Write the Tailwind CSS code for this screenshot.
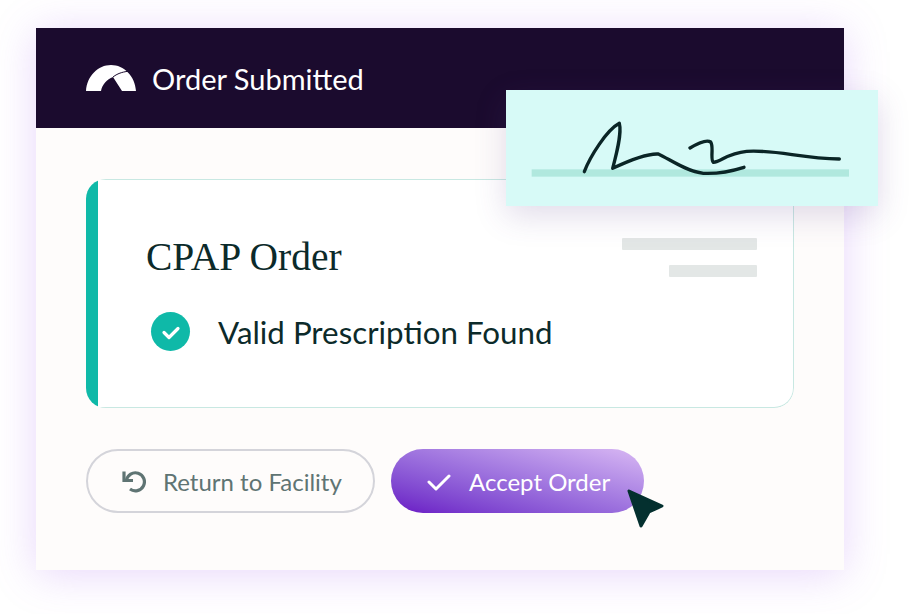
<!DOCTYPE html>
<html lang="en">
<head>
  <meta charset="UTF-8" />
  <title>Order Submitted</title>
  <script src="https://cdn.jsdelivr.net/npm/@tailwindcss/browser@4"></script>
</head>
<body class="bg-white font-['Lato',sans-serif] overflow-hidden">
  <div class="relative w-[915px] h-[614px] pl-[36px] pt-[28px]">

    <!-- Main panel -->
    <div class="w-[808px] h-[542px] bg-[#fefcfb] shadow-[0_4px_40px_rgba(165,95,240,0.26)]">
      <div class="h-[100px] bg-[#1b0b2e] flex items-center pl-[50px] gap-[16px]">
        <svg class="w-[50px] h-[26px]" viewBox="0 0 50 26">
          <path fill="#fff" d="M0 26C1 11 12 0 25 0S49 11 50 26H36L27 12C21 14 16 20 15 26Z" />
          <path fill="none" stroke="#1b0b2e" stroke-width="1" d="M27 12C32 8 38 6.500 45 6" />
        </svg>
        <span class="pt-[2px] text-[29px] text-white">Order Submitted</span>
      </div>

      <div class="px-[50px] pt-[51px]">
        <!-- Card -->
        <div class="flex w-[708px] h-[229px] rounded-[20px] overflow-hidden">
          <div class="w-[12px] bg-[#0fb9a8]"></div>
          <div class="flex-1 bg-white border border-l-0 border-[#c8e8e2] rounded-r-[20px] flex justify-between pl-[48px] pr-[36px]">
            <div class="pt-[52px]">
              <h2 class="font-['Liberation_Serif',serif] text-[39.500px] leading-[50px] text-[#0c2a2a]">CPAP Order</h2>
              <div class="flex items-center gap-[28px] mt-[29px] pl-[5px]">
                <div class="w-[39px] h-[39px] rounded-full bg-[#0fb9a8] flex items-center justify-center">
                  <svg class="w-[20px] h-[20px]" viewBox="0 0 20 20" fill="none" stroke="#fff" stroke-width="3.200" stroke-linecap="round" stroke-linejoin="round"><path d="M3 10.500l5 5 9-9" /></svg>
                </div>
                <span class="text-[31.300px] leading-[40px] pt-[1px] text-[#0c2a2a]">Valid Prescription Found</span>
              </div>
            </div>
            <div class="flex flex-col items-end gap-[15px] pt-[58px]">
              <div class="w-[135px] h-[12px] bg-[#e3e7e6] rounded-[1px]"></div>
              <div class="w-[88px] h-[12px] bg-[#e3e7e6] rounded-[1px]"></div>
            </div>
          </div>
        </div>

        <!-- Buttons -->
        <div class="flex gap-[16px] mt-[41px]">
          <button class="w-[289px] h-[64px] rounded-full border-2 border-[#d4d4da] flex items-center pl-[34px] gap-[17px] text-[24px] text-[#5f7473]">
            <svg class="w-[24px] h-[24px]" viewBox="0 0 24 24" fill="none" stroke="#5f7473" stroke-width="3.200"><path d="M4.500 11.500A9 9 0 1 1 8 20" /><path d="M2 2.500v9h9" /></svg>
            <span class="pt-[1px]">Return to Facility</span>
          </button>
          <button class="w-[253px] h-[64px] rounded-full bg-linear-to-tr from-[#6a12c4] to-[#d9b8f3] flex items-center pl-[36px] gap-[18px] text-[24px] text-white">
            <svg class="w-[24px] h-[24px]" viewBox="0 0 24 24" fill="none" stroke="#fff" stroke-width="3" stroke-linecap="round" stroke-linejoin="round"><path d="M2 13l7 7 13-13" /></svg>
            <span class="pt-[1px]">Accept Order</span>
          </button>
        </div>
      </div>
    </div>

    <!-- Signature note -->
    <div class="absolute left-[506px] top-[90px] w-[372px] h-[116px] bg-[#d7faf7] shadow-[0_10px_30px_rgba(90,60,140,0.18)]">
      <svg class="w-full h-full" viewBox="18 30 1116 348" fill="none">
        <rect x="95" y="268" width="952" height="22" fill="#b0e8de" />
        <path stroke="#0a2526" stroke-width="10" stroke-linecap="round" stroke-linejoin="round" d="M253 275C270 230 320 150 358 130C366 160 350 220 338 265C380 245 440 220 475 222C510 238 560 275 610 280C650 282 700 272 732 262" />
        <path stroke="#0a2526" stroke-width="10" stroke-linecap="round" stroke-linejoin="round" d="M570 204C590 192 620 178 632 186C642 200 630 240 640 247C665 245 680 220 740 214C830 208 900 235 1018 237" />
      </svg>
    </div>

    <!-- Cursor -->
    <svg class="absolute left-[624px] top-[486px] w-[42px] h-[44px]" viewBox="0 0 42 44">
      <path fill="#04302f" stroke="#04302f" stroke-width="3" stroke-linejoin="round" d="M5 5L38 20L25 26L17 40Z" />
    </svg>
  </div>
</body>
</html>
